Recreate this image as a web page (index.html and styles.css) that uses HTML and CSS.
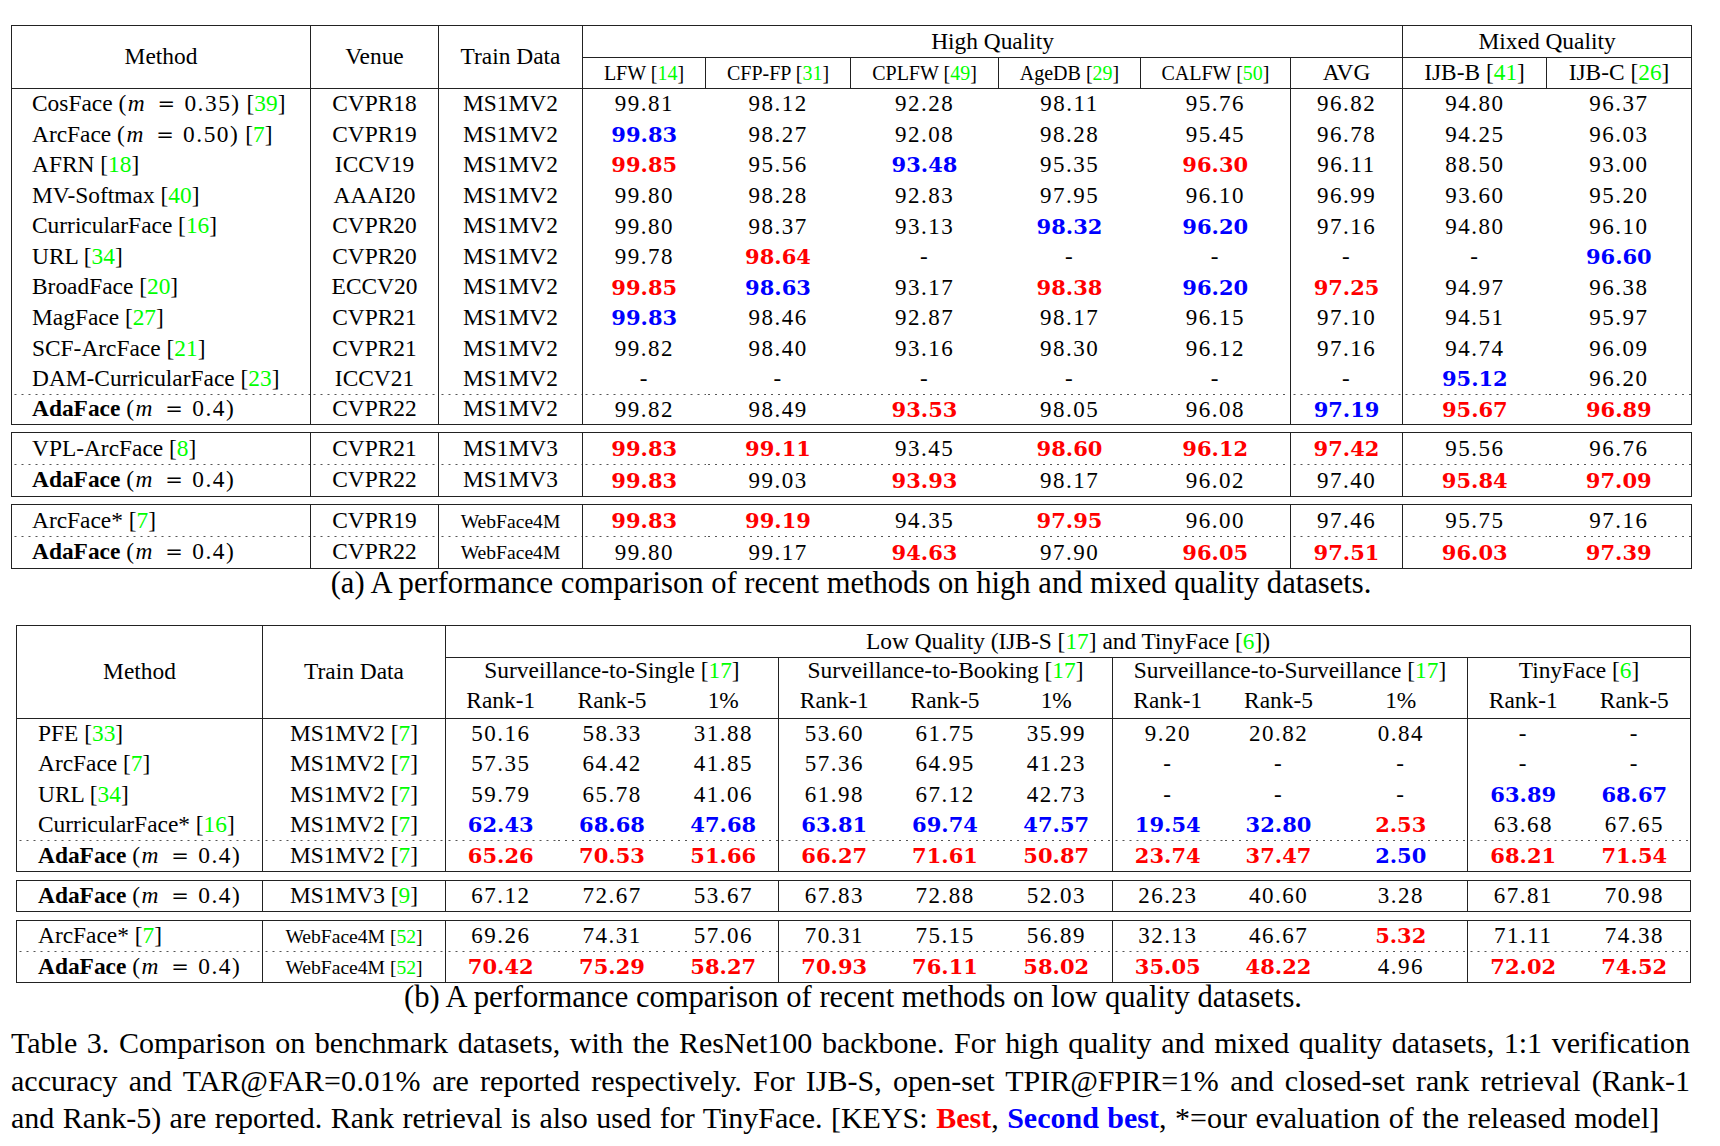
FILE: index.html
```html
<!DOCTYPE html>
<html lang="en">
<head>
<meta charset="utf-8">
<title>Table 3</title>
<link rel="stylesheet" href="styles.css">
</head>
<body>
<div class="page">

  <div class="sub sub-a">
    <table class="tbl t1">
      <colgroup><col><col><col><col><col><col><col><col><col><col><col></colgroup>
      <thead>
        <tr class="h32">
          <th rowspan="2">Method</th>
          <th rowspan="2">Venue</th>
          <th rowspan="2">Train Data</th>
          <th colspan="6">High Quality</th>
          <th colspan="2">Mixed Quality</th>
        </tr>
        <tr class="h31">
          <th class="sm">LFW [<span class="g">14</span>]</th>
          <th class="sm">CFP-FP [<span class="g">31</span>]</th>
          <th class="sm">CPLFW [<span class="g">49</span>]</th>
          <th class="sm">AgeDB [<span class="g">29</span>]</th>
          <th class="sm">CALFW [<span class="g">50</span>]</th>
          <th>AVG</th>
          <th>IJB-B [<span class="g">41</span>]</th>
          <th>IJB-C [<span class="g">26</span>]</th>
        </tr>
      </thead>
      <tbody>
        <tr class="h306"><td>CosFace <span class="math">(<i>m</i> <span class="eq">=</span> 0.35)</span> [<span class="g">39</span>]</td><td>CVPR18</td><td>MS1MV2</td><td>99.81</td><td>98.12</td><td>92.28</td><td>98.11</td><td>95.76</td><td>96.82</td><td>94.80</td><td>96.37</td></tr>
        <tr class="h306"><td>ArcFace <span class="math">(<i>m</i> <span class="eq">=</span> 0.50)</span> [<span class="g">7</span>]</td><td>CVPR19</td><td>MS1MV2</td><td><b class="sec">99.83</b></td><td>98.27</td><td>92.08</td><td>98.28</td><td>95.45</td><td>96.78</td><td>94.25</td><td>96.03</td></tr>
        <tr class="h306"><td>AFRN [<span class="g">18</span>]</td><td>ICCV19</td><td>MS1MV2</td><td><b class="best">99.85</b></td><td>95.56</td><td><b class="sec">93.48</b></td><td>95.35</td><td><b class="best">96.30</b></td><td>96.11</td><td>88.50</td><td>93.00</td></tr>
        <tr class="h306"><td>MV-Softmax [<span class="g">40</span>]</td><td>AAAI20</td><td>MS1MV2</td><td>99.80</td><td>98.28</td><td>92.83</td><td>97.95</td><td>96.10</td><td>96.99</td><td>93.60</td><td>95.20</td></tr>
        <tr class="h306"><td>CurricularFace [<span class="g">16</span>]</td><td>CVPR20</td><td>MS1MV2</td><td>99.80</td><td>98.37</td><td>93.13</td><td><b class="sec">98.32</b></td><td><b class="sec">96.20</b></td><td>97.16</td><td>94.80</td><td>96.10</td></tr>
        <tr class="h306"><td>URL [<span class="g">34</span>]</td><td>CVPR20</td><td>MS1MV2</td><td>99.78</td><td><b class="best">98.64</b></td><td>-</td><td>-</td><td>-</td><td>-</td><td>-</td><td><b class="sec">96.60</b></td></tr>
        <tr class="h306"><td>BroadFace [<span class="g">20</span>]</td><td>ECCV20</td><td>MS1MV2</td><td><b class="best">99.85</b></td><td><b class="sec">98.63</b></td><td>93.17</td><td><b class="best">98.38</b></td><td><b class="sec">96.20</b></td><td><b class="best">97.25</b></td><td>94.97</td><td>96.38</td></tr>
        <tr class="h306"><td>MagFace [<span class="g">27</span>]</td><td>CVPR21</td><td>MS1MV2</td><td><b class="sec">99.83</b></td><td>98.46</td><td>92.87</td><td>98.17</td><td>96.15</td><td>97.10</td><td>94.51</td><td>95.97</td></tr>
        <tr class="h306"><td>SCF-ArcFace [<span class="g">21</span>]</td><td>CVPR21</td><td>MS1MV2</td><td>99.82</td><td>98.40</td><td>93.16</td><td>98.30</td><td>96.12</td><td>97.16</td><td>94.74</td><td>96.09</td></tr>
        <tr class="h306"><td>DAM-CurricularFace [<span class="g">23</span>]</td><td>ICCV21</td><td>MS1MV2</td><td>-</td><td>-</td><td>-</td><td>-</td><td>-</td><td>-</td><td><b class="sec">95.12</b></td><td>96.20</td></tr>
        <tr class="h30 dot"><td><b>AdaFace</b> <span class="math">(<i>m</i> <span class="eq">=</span> 0.4)</span></td><td>CVPR22</td><td>MS1MV2</td><td>99.82</td><td>98.49</td><td><b class="best">93.53</b></td><td>98.05</td><td>96.08</td><td><b class="sec">97.19</b></td><td><b class="best">95.67</b></td><td><b class="best">96.89</b></td></tr>
      </tbody>
    </table>

    <table class="tbl t1 blk">
      <colgroup><col><col><col><col><col><col><col><col><col><col><col></colgroup>
      <tbody>
        <tr class="h32"><td>VPL-ArcFace [<span class="g">8</span>]</td><td>CVPR21</td><td>MS1MV3</td><td><b class="best">99.83</b></td><td><b class="best">99.11</b></td><td>93.45</td><td><b class="best">98.60</b></td><td><b class="best">96.12</b></td><td><b class="best">97.42</b></td><td>95.56</td><td>96.76</td></tr>
        <tr class="h32 dot"><td><b>AdaFace</b> <span class="math">(<i>m</i> <span class="eq">=</span> 0.4)</span></td><td>CVPR22</td><td>MS1MV3</td><td><b class="best">99.83</b></td><td>99.03</td><td><b class="best">93.93</b></td><td>98.17</td><td>96.02</td><td>97.40</td><td><b class="best">95.84</b></td><td><b class="best">97.09</b></td></tr>
      </tbody>
    </table>

    <table class="tbl t1 blk">
      <colgroup><col><col><col><col><col><col><col><col><col><col><col></colgroup>
      <tbody>
        <tr class="h32"><td>ArcFace* [<span class="g">7</span>]</td><td>CVPR19</td><td><span class="wf">WebFace4M</span></td><td><b class="best">99.83</b></td><td><b class="best">99.19</b></td><td>94.35</td><td><b class="best">97.95</b></td><td>96.00</td><td>97.46</td><td>95.75</td><td>97.16</td></tr>
        <tr class="h32 dot"><td><b>AdaFace</b> <span class="math">(<i>m</i> <span class="eq">=</span> 0.4)</span></td><td>CVPR22</td><td><span class="wf">WebFace4M</span></td><td>99.80</td><td>99.17</td><td><b class="best">94.63</b></td><td>97.90</td><td><b class="best">96.05</b></td><td><b class="best">97.51</b></td><td><b class="best">96.03</b></td><td><b class="best">97.39</b></td></tr>
      </tbody>
    </table>

    <p class="subcap">(a) A performance comparison of recent methods on high and mixed quality datasets.</p>
  </div>

  <div class="sub sub-b">
    <table class="tbl t2">
      <colgroup><col><col><col><col><col><col><col><col><col><col><col><col><col></colgroup>
      <thead>
        <tr class="h32">
          <th rowspan="3" class="br bb">Method</th>
          <th rowspan="3" class="br bb">Train Data</th>
          <th colspan="11" class="bb">Low Quality (IJB-S [<span class="g">17</span>] and TinyFace [<span class="g">6</span>])</th>
        </tr>
        <tr class="h30 up">
          <th colspan="3" class="br">Surveillance-to-Single [<span class="g">17</span>]</th>
          <th colspan="3" class="br">Surveillance-to-Booking [<span class="g">17</span>]</th>
          <th colspan="3" class="br">Surveillance-to-Surveillance [<span class="g">17</span>]</th>
          <th colspan="2">TinyFace [<span class="g">6</span>]</th>
        </tr>
        <tr class="h30 up">
          <th class="bb">Rank-1</th><th class="bb">Rank-5</th><th class="bb br">1%</th>
          <th class="bb">Rank-1</th><th class="bb">Rank-5</th><th class="bb br">1%</th>
          <th class="bb">Rank-1</th><th class="bb">Rank-5</th><th class="bb br">1%</th>
          <th class="bb">Rank-1</th><th class="bb">Rank-5</th>
        </tr>
      </thead>
      <tbody>
        <tr class="h305"><td>PFE [<span class="g">33</span>]</td><td>MS1MV2 [<span class="g">7</span>]</td><td>50.16</td><td>58.33</td><td>31.88</td><td>53.60</td><td>61.75</td><td>35.99</td><td>9.20</td><td>20.82</td><td>0.84</td><td>-</td><td>-</td></tr>
        <tr class="h305"><td>ArcFace [<span class="g">7</span>]</td><td>MS1MV2 [<span class="g">7</span>]</td><td>57.35</td><td>64.42</td><td>41.85</td><td>57.36</td><td>64.95</td><td>41.23</td><td>-</td><td>-</td><td>-</td><td>-</td><td>-</td></tr>
        <tr class="h305"><td>URL [<span class="g">34</span>]</td><td>MS1MV2 [<span class="g">7</span>]</td><td>59.79</td><td>65.78</td><td>41.06</td><td>61.98</td><td>67.12</td><td>42.73</td><td>-</td><td>-</td><td>-</td><td><b class="sec">63.89</b></td><td><b class="sec">68.67</b></td></tr>
        <tr class="h305"><td>CurricularFace* [<span class="g">16</span>]</td><td>MS1MV2 [<span class="g">7</span>]</td><td><b class="sec">62.43</b></td><td><b class="sec">68.68</b></td><td><b class="sec">47.68</b></td><td><b class="sec">63.81</b></td><td><b class="sec">69.74</b></td><td><b class="sec">47.57</b></td><td><b class="sec">19.54</b></td><td><b class="sec">32.80</b></td><td><b class="best">2.53</b></td><td>63.68</td><td>67.65</td></tr>
        <tr class="h31 dot"><td><b>AdaFace</b> <span class="math">(<i>m</i> <span class="eq">=</span> 0.4)</span></td><td>MS1MV2 [<span class="g">7</span>]</td><td><b class="best">65.26</b></td><td><b class="best">70.53</b></td><td><b class="best">51.66</b></td><td><b class="best">66.27</b></td><td><b class="best">71.61</b></td><td><b class="best">50.87</b></td><td><b class="best">23.74</b></td><td><b class="best">37.47</b></td><td><b class="sec">2.50</b></td><td><b class="best">68.21</b></td><td><b class="best">71.54</b></td></tr>
      </tbody>
    </table>

    <table class="tbl t2 blk">
      <colgroup><col><col><col><col><col><col><col><col><col><col><col><col><col></colgroup>
      <tbody>
        <tr class="h31"><td><b>AdaFace</b> <span class="math">(<i>m</i> <span class="eq">=</span> 0.4)</span></td><td>MS1MV3 [<span class="g">9</span>]</td><td>67.12</td><td>72.67</td><td>53.67</td><td>67.83</td><td>72.88</td><td>52.03</td><td>26.23</td><td>40.60</td><td>3.28</td><td>67.81</td><td>70.98</td></tr>
      </tbody>
    </table>

    <table class="tbl t2 blk">
      <colgroup><col><col><col><col><col><col><col><col><col><col><col><col><col></colgroup>
      <tbody>
        <tr class="h31"><td>ArcFace* [<span class="g">7</span>]</td><td><span class="wf">WebFace4M [<span class="g">52</span>]</span></td><td>69.26</td><td>74.31</td><td>57.06</td><td>70.31</td><td>75.15</td><td>56.89</td><td>32.13</td><td>46.67</td><td><b class="best">5.32</b></td><td>71.11</td><td>74.38</td></tr>
        <tr class="h31 dot"><td><b>AdaFace</b> <span class="math">(<i>m</i> <span class="eq">=</span> 0.4)</span></td><td><span class="wf">WebFace4M [<span class="g">52</span>]</span></td><td><b class="best">70.42</b></td><td><b class="best">75.29</b></td><td><b class="best">58.27</b></td><td><b class="best">70.93</b></td><td><b class="best">76.11</b></td><td><b class="best">58.02</b></td><td><b class="best">35.05</b></td><td><b class="best">48.22</b></td><td>4.96</td><td><b class="best">72.02</b></td><td><b class="best">74.52</b></td></tr>
      </tbody>
    </table>

    <p class="subcap">(b) A performance comparison of recent methods on low quality datasets.</p>
  </div>

  <p class="caption">
    <span class="line">Table 3. Comparison on benchmark datasets, with the ResNet100 backbone. For high quality and mixed quality datasets, 1:1 verification</span>
    <span class="line">accuracy and TAR@FAR=<span class="cm">0.01%</span> are reported respectively. For IJB-S, open-set TPIR@FPIR=<span class="cm">1%</span> and closed-set rank retrieval (Rank-1</span>
    <span class="line last">and Rank-5) are reported. Rank retrieval is also used for TinyFace. [KEYS: <b class="kb">Best</b>, <b class="ks">Second best</b>, *=our evaluation of the released model]</span>
  </p>

</div>
</body>
</html>
```

FILE: styles.css
```css
* { box-sizing: border-box; }

html, body {
  margin: 0;
  padding: 0;
  background: #ffffff;
}

body {
  width: 1720px;
  font-family: "Liberation Serif", "Times New Roman", serif;
  color: #000000;
}

.page {
  padding-top: 25px;
}

.sub {
  display: flex;
  flex-direction: column;
}

.sub-a {
  margin-left: 11px;
  width: 1680px;
}

.sub-b {
  margin-left: 16px;
  width: 1674px;
  margin-top: 25px;
}

/* ---------- tables ---------- */

.tbl {
  border-collapse: collapse;
  table-layout: fixed;
  border: 1px solid #222;
  font-size: 23.4px;
}

.t1 { width: 1680px; }
.t2 { width: 1674px; }

.t1.blk { margin-top: 7px; }
.t2.blk { margin-top: 8px; }

.tbl th,
.tbl td {
  padding: 0;
  text-align: center;
  vertical-align: middle;
  white-space: nowrap;
  font-weight: normal;
  line-height: 1.1;
}

.t1 th { border: 1px solid #222; }

.t1 col:nth-child(1)  { width: 299px; }
.t1 col:nth-child(2)  { width: 128px; }
.t1 col:nth-child(3)  { width: 144px; }
.t1 col:nth-child(4)  { width: 123px; }
.t1 col:nth-child(5)  { width: 145px; }
.t1 col:nth-child(6)  { width: 148px; }
.t1 col:nth-child(7)  { width: 142px; }
.t1 col:nth-child(8)  { width: 150px; }
.t1 col:nth-child(9)  { width: 112px; }
.t1 col:nth-child(10) { width: 144px; }
.t1 col:nth-child(11) { width: 145px; }

.t2 col:nth-child(1)  { width: 246px; }
.t2 col:nth-child(2)  { width: 183px; }
.t2 col:nth-child(3)  { width: 110px; }
.t2 col:nth-child(4)  { width: 113px; }
.t2 col:nth-child(5)  { width: 110px; }
.t2 col:nth-child(6)  { width: 111px; }
.t2 col:nth-child(7)  { width: 111px; }
.t2 col:nth-child(8)  { width: 112px; }
.t2 col:nth-child(9)  { width: 110px; }
.t2 col:nth-child(10) { width: 112px; }
.t2 col:nth-child(11) { width: 133px; }
.t2 col:nth-child(12) { width: 111px; }
.t2 col:nth-child(13) { width: 112px; }

.t1 td:nth-child(1),
.t1 td:nth-child(2),
.t1 td:nth-child(3),
.t1 td:nth-child(8),
.t1 td:nth-child(9) {
  border-right: 1px solid #222;
}

.t2 td:nth-child(1),
.t2 td:nth-child(2),
.t2 td:nth-child(5),
.t2 td:nth-child(8),
.t2 td:nth-child(11) {
  border-right: 1px solid #222;
}

.t2 th.br { border-right: 1px solid #222; }
.t2 th.bb { border-bottom: 1px solid #222; }

.t2 .up th { padding-bottom: 4px; }

.t1 td:first-child { text-align: left; padding-left: 20px; }
.t2 td:first-child { text-align: left; padding-left: 21px; }

/* numeric columns */
.t1 td:nth-child(n+4),
.t2 td:nth-child(n+3) {
  font-size: 23px;
  letter-spacing: 1.5px;
}

.t2 td:nth-child(2) { letter-spacing: 0; }

.sm { font-size: 20px; }
.wf { font-size: 19.6px; }

.h30  { height: 30px; }
.h305 { height: 30.5px; }
.h306 { height: 30.6px; }
.h31  { height: 31px; }
.h32  { height: 32px; }

.dot td {
  background-image: linear-gradient(to right, #555 0, #555 1.6px, transparent 1.6px);
  background-size: 7px 1.2px;
  background-repeat: repeat-x;
  background-position: 2px 0;
}

.g { color: #00ff00; }

.best,
.sec {
  font-family: "DejaVu Serif", serif;
  font-weight: bold;
  font-size: 21px;
  letter-spacing: 0;
}

.best { color: #ff0000; }
.sec  { color: #0000ff; }

.math {
  letter-spacing: 1.5px;
  word-spacing: 2px;
}

.math i {
  font-style: italic;
  padding-right: 2px;
}

.math .eq {
  font-family: "DejaVu Serif", serif;
  font-size: 21px;
  letter-spacing: 0;
}

/* ---------- captions ---------- */

.subcap {
  margin: -3px 0 0 0;
  font-size: 30.6px;
  line-height: 34.3px;
  text-align: center;
}

.caption {
  margin: 10.4px 0 0 11px;
  width: 1679px;
  font-size: 30px;
  line-height: 37.5px;
}

.caption .line {
  display: block;
  text-align: justify;
  text-align-last: justify;
}

.caption .line.last {
  text-align: left;
  text-align-last: left;
  word-spacing: 1px;
}

.cm { letter-spacing: 0.5px; }

.kb { color: #ff0000; }
.ks { color: #0000ff; }
```
